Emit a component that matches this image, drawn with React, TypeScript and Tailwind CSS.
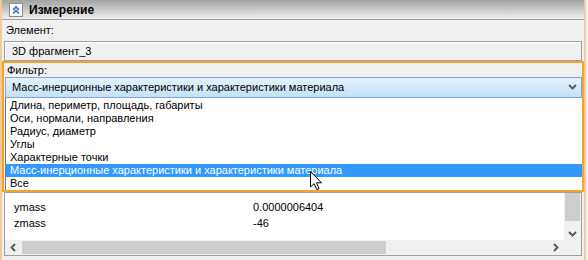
import React from "react";

const options = [
  "Длина, периметр, площадь, габариты",
  "Оси, нормали, направления",
  "Радиус, диаметр",
  "Углы",
  "Характерные точки",
  "Масс-инерционные характеристики и характеристики материала",
  "Все",
];

const selected = 5;

const rows = [
  { name: "ymass", value: "0.0000006404" },
  { name: "zmass", value: "-46" },
];

function CollapseIcon() {
  return (
    <div className="w-[14px] h-[14px] border border-[#8c8c8c] bg-white flex items-center justify-center">
      <svg width="10" height="10" viewBox="0 0 10 10">
        <path d="M2 5 L5 2 L8 5" fill="none" stroke="#2f6fc0" strokeWidth="1.6" />
        <path d="M2 8.5 L5 5.5 L8 8.5" fill="none" stroke="#2f6fc0" strokeWidth="1.6" />
      </svg>
    </div>
  );
}

function Chevron({ dir }: { dir: "down" | "left" | "right" }) {
  const d =
    dir === "down" ? "M1 2 L4.5 5.5 L8 2" : dir === "left" ? "M6 1 L2.5 4.5 L6 8" : "M3 1 L6.5 4.5 L3 8";
  return (
    <svg width="9" height="9" viewBox="0 0 9 9">
      <path d={d} fill="none" stroke="#555" strokeWidth="1.8" />
    </svg>
  );
}

function Cursor() {
  return (
    <svg width="13" height="20" viewBox="0 0 13 20" className="absolute left-[310px] top-[171px]">
      <path
        d="M0.5 0.5 L0.5 16 L4.2 12.6 L6.8 18.6 L9 17.6 L6.5 11.8 L11.5 11.8 Z"
        fill="white"
        stroke="black"
        strokeWidth="1"
        strokeLinejoin="round"
      />
    </svg>
  );
}

export default function App() {
  return (
    <div
      className="relative w-[588px] h-[260px] overflow-hidden bg-[#f0f0f0] text-[11px] text-black"
      style={{ fontFamily: '"Liberation Sans", Arial, sans-serif' }}
    >
      <div className="w-[586px] h-full border-l-2 border-r-2 border-[#f3cb98] flex flex-col">
        {/* header */}
        <div className="h-[20px] shrink-0 bg-gradient-to-b from-[#a3a3a3] to-[#f0f0f0] border-b border-[#a0a0a0] flex items-center pl-[7px] gap-[6px]">
          <CollapseIcon />
          <span className="font-bold text-[12px]">Измерение</span>
        </div>

        {/* element */}
        <div className="h-[21px] shrink-0 flex items-center pl-[4px]">Элемент:</div>
        <div className="mx-[2px] h-[20px] shrink-0 border border-[#a0a0a0] bg-[#f0f0f0] flex items-center pl-[7px] shadow-[inset_1px_1px_0_#ffffff]">
          3D фрагмент_3
        </div>

        {/* filter */}
        <div className="h-[131px] shrink-0 border-2 border-[#f4a42c] flex flex-col pl-[1px]">
          <div className="h-[14px] flex items-center pl-[2px]">Фильтр:</div>
          <div className="h-[21px] border border-[#79a6d2] bg-gradient-to-b from-[#e4f1fc] to-[#c5e0f8] flex items-center justify-between pl-[6px] pr-[4px]">
            <span>Масс-инерционные характеристики и характеристики материала</span>
            <Chevron dir="down" />
          </div>
          <div className="flex-1 bg-white border-l border-[#7a7a7a] pt-[1px]">
            {options.map((o, i) => (
              <div
                key={o}
                className={`h-[13px] leading-[13px] pl-[4px] ${i === selected ? "bg-[#3399ff] text-white" : ""}`}
              >
                {o}
              </div>
            ))}
          </div>
        </div>

        {/* properties table */}
        <div className="mx-[2px] h-[64px] shrink-0 border border-[#a0a0a0] bg-white flex flex-col">
          <div className="flex-1 flex min-h-0">
            <div className="flex-1 pt-[6px]">
              {rows.map((r) => (
                <div key={r.name} className="h-[16px] flex items-center">
                  <span className="w-[248px] pl-[9px]">{r.name}</span>
                  <span>{r.value}</span>
                </div>
              ))}
            </div>
            <div className="w-[17px] bg-[#f0f0f0] flex flex-col items-center">
              <div className="w-[15px] h-[28px] bg-[#cdcdcd]" />
              <div className="flex-1" />
              <div className="h-[12px] flex items-center">
                <Chevron dir="down" />
              </div>
            </div>
          </div>
          <div className="h-[15px] shrink-0 bg-[#f0f0f0] flex items-center">
            <div className="w-[17px] flex justify-center">
              <Chevron dir="left" />
            </div>
            <div className="w-[364px] h-[13px] bg-[#cdcdcd]" />
            <div className="flex-1" />
            <div className="w-[17px] flex justify-center">
              <Chevron dir="right" />
            </div>
            <div className="w-[17px]" />
          </div>
        </div>
      </div>
      <Cursor />
    </div>
  );
}
